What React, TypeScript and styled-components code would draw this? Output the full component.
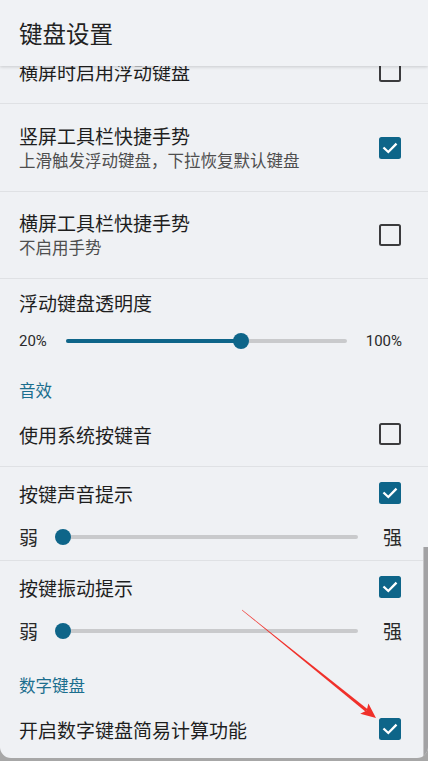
import React from "react";
import styled, { createGlobalStyle } from "styled-components";

const Global = createGlobalStyle`
  html, body { margin: 0; padding: 0; background: #a7a7a7; }
  body { font-family: "Noto Sans CJK SC", "Noto Sans", Roboto, sans-serif; }
  * { box-sizing: border-box; }
`;

const teal = "#0e6589";

const Page = styled.div`
  position: relative;
  width: 428px;
  height: 761px;
  background: #a7a7a7;
`;

const Card = styled.div`
  position: relative;
  width: 428px;
  height: 758px;
  background: #eff1f4;
  border-radius: 0 0 11px 11px;
  overflow: hidden;
  display: flex;
  flex-direction: column;
`;

const Header = styled.header`
  position: relative;
  z-index: 2;
  flex: 0 0 66px;
  display: flex;
  align-items: center;
  padding-left: 19px;
  background: #f0f2f5;
  box-shadow: 0 1px 3px rgba(0, 0, 0, 0.16);
`;

const HeaderTitle = styled.h1`
  margin: 0;
  font-size: 23.5px;
  font-weight: 400;
  color: #222;
  line-height: 30px;
`;

const Viewport = styled.div`
  flex: 1;
  overflow: hidden;
`;

const List = styled.div`
  margin-top: -27px;
  display: flex;
  flex-direction: column;
`;

const Row = styled.div<{ $h: number; $divider?: boolean }>`
  height: ${(p) => p.$h + (p.$divider ? 1 : 0)}px;
  flex: 0 0 auto;
  display: flex;
  align-items: center;
  justify-content: space-between;
  padding: 0 27px 0 19px;
  border-bottom: ${(p) => (p.$divider ? "1px solid #dfe1e4" : "none")};
`;

const TextBlock = styled.div`
  display: flex;
  flex-direction: column;
`;

const Title = styled.div`
  font-size: 19px;
  line-height: 25px;
  color: #1e1e1e;
  white-space: nowrap;
`;

const Summary = styled.div`
  font-size: 16.5px;
  line-height: 24.5px;
  color: #4e4e4e;
  white-space: nowrap;
`;

const Group = styled.div<{ $pt: number; $pb: number; $divider?: boolean }>`
  flex: 0 0 auto;
  display: flex;
  flex-direction: column;
  padding: ${(p) => p.$pt}px 0 ${(p) => p.$pb}px;
  border-bottom: ${(p) => (p.$divider ? "1px solid #dfe1e4" : "none")};
`;

const GroupHead = styled.div<{ $h: number }>`
  height: ${(p) => p.$h}px;
  display: flex;
  align-items: center;
  justify-content: space-between;
  padding: 0 27px 0 19px;
`;

const SliderRow = styled.div<{ $h: number; $gap: number; $mt?: number }>`
  height: ${(p) => p.$h}px;
  margin-top: ${(p) => p.$mt ?? 0}px;
  display: flex;
  align-items: center;
  gap: ${(p) => p.$gap}px;
  padding: 0 26px 0 19px;
`;

const RangeLabel = styled.span<{ $latin?: boolean }>`
  font-family: ${(p) =>
    p.$latin ? 'Roboto, "Noto Sans", sans-serif' : '"Noto Sans CJK SC", sans-serif'};
  font-size: ${(p) => (p.$latin ? "15px" : "19px")};
  line-height: 24px;
  color: #2a2a2a;
  white-space: nowrap;
`;

const Track = styled.div`
  position: relative;
  flex: 1;
  height: 3.5px;
  background: #c9cacc;
  border-radius: 2px;
`;

const Fill = styled.div`
  position: absolute;
  left: 0;
  top: 0;
  bottom: 0;
  background: ${teal};
  border-radius: 2px;
`;

const Thumb = styled.div`
  position: absolute;
  top: 50%;
  width: 16px;
  height: 16px;
  margin: -8px 0 0 -8px;
  border-radius: 50%;
  background: ${teal};
`;

const Section = styled.div`
  flex: 0 0 auto;
  padding: 12px 20px 0 19px;
  font-size: 16.5px;
  line-height: 24px;
  color: #1b6e8e;
`;

const Box = styled.div<{ $checked: boolean }>`
  flex: 0 0 auto;
  width: 22px;
  height: 22px;
  border-radius: 2.5px;
  display: flex;
  align-items: center;
  justify-content: center;
  background: ${(p) => (p.$checked ? teal : "transparent")};
  border: ${(p) => (p.$checked ? "none" : "2.6px solid #3b3b3d")};
`;

const Scrollbar = styled.div`
  position: absolute;
  right: 0;
  top: 547px;
  width: 5px;
  height: 211px;
  background: #a2a2a4;
  border-left: 1px solid #c4c4c6;
  z-index: 3;
`;

const Overlay = styled.svg`
  position: absolute;
  left: 0;
  top: 0;
  pointer-events: none;
  z-index: 4;
`;

function Checkbox({ checked }: { checked: boolean }) {
  return (
    <Box $checked={checked}>
      {checked && (
        <svg width="22" height="22" viewBox="0 0 22 22">
          <polyline
            points="5.3,11.3 9.3,15 16.7,7.4"
            fill="none"
            stroke="#fff"
            strokeWidth="2.3"
            strokeLinecap="square"
          />
        </svg>
      )}
    </Box>
  );
}

function Slider({ value }: { value: number }) {
  return (
    <Track>
      <Fill style={{ width: `${value}%` }} />
      <Thumb style={{ left: `${value}%` }} />
    </Track>
  );
}

function Arrow() {
  const sx = 242, sy = 610, tx = 376, ty = 718;
  const dx = tx - sx, dy = ty - sy;
  const len = Math.hypot(dx, dy);
  const ux = dx / len, uy = dy / len;
  const nx = -uy, ny = ux;
  const hl = 15, hw = 6.5, sw = 1.6;
  const bx = tx - ux * hl, by = ty - uy * hl;
  const nbx = tx - ux * (hl - 3), nby = ty - uy * (hl - 3);
  const shaft = [
    [sx + nx * 0.2, sy + ny * 0.2],
    [nbx + nx * sw, nby + ny * sw],
    [nbx - nx * sw, nby - ny * sw],
    [sx - nx * 0.2, sy - ny * 0.2],
  ];
  const head = [
    [tx, ty],
    [bx + nx * hw, by + ny * hw],
    [nbx, nby],
    [bx - nx * hw, by - ny * hw],
  ];
  const pts = (a: number[][]) => a.map((p) => p.join(",")).join(" ");
  return (
    <Overlay width="428" height="761" viewBox="0 0 428 761">
      <polygon points={pts(shaft)} fill="#f0302a" />
      <polygon points={pts(head)} fill="#f0302a" />
    </Overlay>
  );
}

export default function App() {
  return (
    <Page>
      <Global />
      <Card>
        <Header>
          <HeaderTitle>键盘设置</HeaderTitle>
        </Header>
        <Viewport>
          <List>
            <Row $h={64} $divider>
              <Title>横屏时启用浮动键盘</Title>
              <Checkbox checked={false} />
            </Row>
            <Row $h={87} $divider>
              <TextBlock>
                <Title>竖屏工具栏快捷手势</Title>
                <Summary>上滑触发浮动键盘，下拉恢复默认键盘</Summary>
              </TextBlock>
              <Checkbox checked />
            </Row>
            <Row $h={86} $divider>
              <TextBlock>
                <Title>横屏工具栏快捷手势</Title>
                <Summary>不启用手势</Summary>
              </TextBlock>
              <Checkbox checked={false} />
            </Row>
            <Group $pt={10} $pb={9}>
              <GroupHead $h={26}>
                <Title>浮动键盘透明度</Title>
              </GroupHead>
              <SliderRow $h={32} $gap={19} $mt={10}>
                <RangeLabel $latin>20%</RangeLabel>
                <Slider value={62.5} />
                <RangeLabel $latin>100%</RangeLabel>
              </SliderRow>
            </Group>
            <Section>音效</Section>
            <Row $h={64} $divider>
              <Title>使用系统按键音</Title>
              <Checkbox checked={false} />
            </Row>
            <Group $pt={0} $pb={5} $divider>
              <GroupHead $h={52}>
                <Title>按键声音提示</Title>
                <Checkbox checked />
              </GroupHead>
              <SliderRow $h={36} $gap={25}>
                <RangeLabel>弱</RangeLabel>
                <Slider value={0} />
                <RangeLabel>强</RangeLabel>
              </SliderRow>
            </Group>
            <Group $pt={0} $pb={12}>
              <GroupHead $h={52}>
                <Title>按键振动提示</Title>
                <Checkbox checked />
              </GroupHead>
              <SliderRow $h={36} $gap={25}>
                <RangeLabel>弱</RangeLabel>
                <Slider value={0} />
                <RangeLabel>强</RangeLabel>
              </SliderRow>
            </Group>
            <Section>数字键盘</Section>
            <Row $h={64}>
              <Title>开启数字键盘简易计算功能</Title>
              <Checkbox checked />
            </Row>
          </List>
        </Viewport>
        <Scrollbar />
      </Card>
      <Arrow />
    </Page>
  );
}
